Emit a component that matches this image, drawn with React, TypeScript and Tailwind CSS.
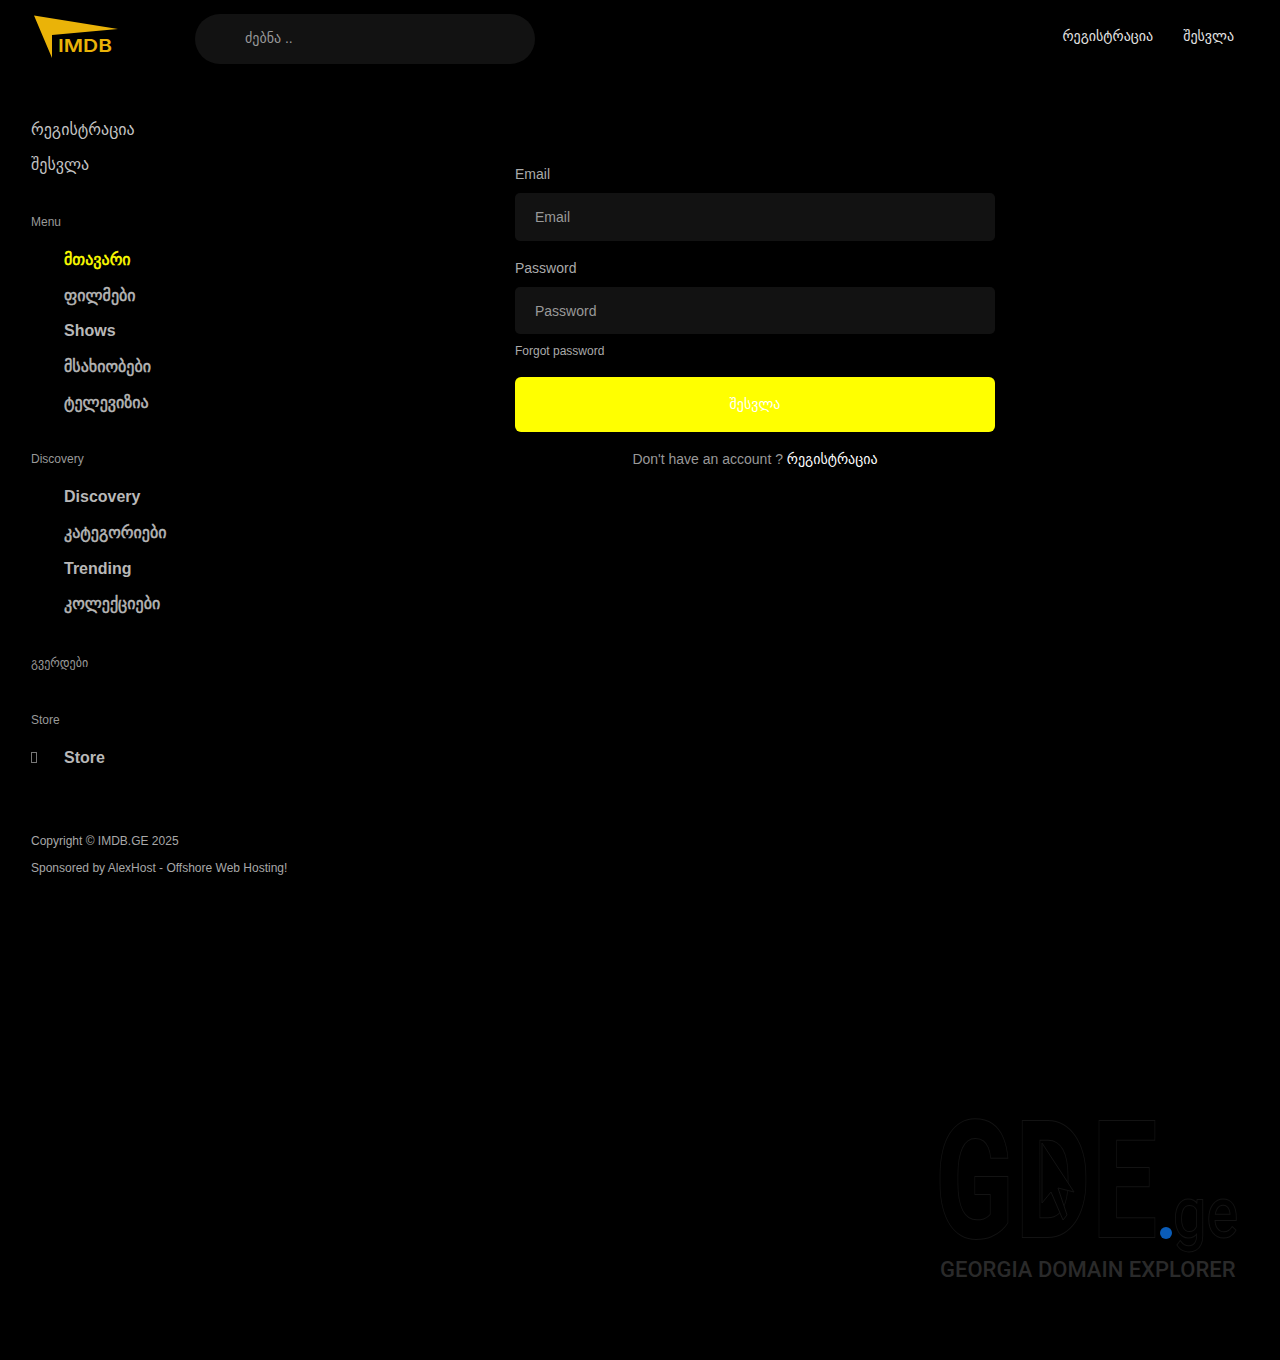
const font = "[font-family:'Liberation_Sans','DejaVu_Sans',sans-serif]";

function NavItem({ label, active, icon, georgian }: { label: string; active?: boolean; icon?: boolean; georgian?: boolean }) {
  return (
    <a className={`flex h-[35.7px] items-center text-base ${active ? "text-[#ffff00]" : "text-[#b8b8b8]"}`}>
      <span className="flex w-[33px] items-center">
        {icon ? <span className="h-[11px] w-[6px] border border-[#777777]" /> : null}
      </span>
      <span className={georgian ? "font-normal [-webkit-text-stroke:0.5px_currentColor]" : "font-bold"}>{label}</span>
    </a>
  );
}

function SectionTitle({ children }: { children: string }) {
  return <div className="flex h-[18px] items-center text-xs text-[#999999]">{children}</div>;
}

function Field({ label, type, nudge }: { label: string; type: string; nudge?: boolean }) {
  return (
    <div className="flex flex-col">
      <label className="mb-[9px] h-[20px] text-sm leading-[20px] text-[#aaaaaa]">{label}</label>
      <input
        type={type}
        placeholder={label}
        className={`h-[47.5px] rounded-[5px] bg-[#121212] px-5 text-sm text-white outline-none placeholder:text-[#999999] ${nudge ? "pt-[2px]" : ""}`}
      />
    </div>
  );
}

export default function App() {
  return (
    <div className={`relative h-[1360px] overflow-hidden bg-black ${font}`}>
      <header className="flex h-[78px] items-start justify-between pr-[46px]">
        <div className="flex items-start">
          <div className="ml-[34px] mt-[15px] h-[44px] w-[86px]">
            <svg viewBox="0 0 86 44" className="h-[44px] w-[86px]">
              <polygon points="0,0.5 84,14 18,20 18,43" fill="#eab308" />
              <text x="24" y="37" fill="#eab308" fontSize="17.5" fontWeight="600" fontFamily="Inter, sans-serif" textLength="54" lengthAdjust="spacingAndGlyphs">IMDB</text>
            </svg>
          </div>
          <div className="ml-[75px] mt-[14px] flex h-[50px] w-[340px] items-center rounded-full bg-[#121212] pb-[2px] pl-[50px] text-sm text-[#999999]">
            ძებნა ..
          </div>
        </div>
        <nav className="mt-[26px] flex gap-[30px] text-sm leading-[20px] text-[#e4e4e4]">
          <a>რეგისტრაცია</a>
          <a>შესვლა</a>
        </nav>
      </header>

      <div className="flex">
        <aside className="w-[230px] shrink-0 whitespace-nowrap pl-[31px] pt-[34px]">
          <div className="flex flex-col text-base text-[#c4c4c4]">
            <a className="flex h-[35px] items-center">რეგისტრაცია</a>
            <a className="flex h-[35px] items-center">შესვლა</a>
          </div>

          <div className="mt-[31px]">
            <SectionTitle>Menu</SectionTitle>
          </div>
          <div className="mt-[11.2px] flex flex-col">
            <NavItem label="მთავარი" active georgian />
            <NavItem label="ფილმები" georgian />
            <NavItem label="Shows" />
            <NavItem label="მსახიობები" georgian />
            <NavItem label="ტელევიზია" georgian />
          </div>

          <div className="mt-[29.3px]">
            <SectionTitle>Discovery</SectionTitle>
          </div>
          <div className="mt-[11.5px] flex flex-col">
            <NavItem label="Discovery" />
            <NavItem label="კატეგორიები" georgian />
            <NavItem label="Trending" />
            <NavItem label="კოლექციები" georgian />
          </div>

          <div className="mt-[31.7px]">
            <SectionTitle>გვერდები</SectionTitle>
          </div>
          <div className="mt-[39px]">
            <SectionTitle>Store</SectionTitle>
          </div>
          <div className="mt-[11px]">
            <NavItem label="Store" icon />
          </div>

          <div className="mt-[56.3px] flex flex-col gap-[9px] text-xs text-[#a8a8a8]">
            <p className="leading-[18px]">Copyright © IMDB.GE 2025</p>
            <p className="leading-[18px]">Sponsored by AlexHost - Offshore Web Hosting!</p>
          </div>
        </aside>

        <main className="flex flex-1 justify-center pt-[86px]">
          <form className="flex w-[480px] flex-col">
            <Field label="Email" type="email" />
            <div className="mt-[17px]">
              <Field label="Password" type="password" nudge />
            </div>
            <a className="mt-[8px] h-[18px] text-xs leading-[18px] text-[#aaaaaa]">Forgot password</a>
            <button type="button" className="mt-[17px] h-[55px] rounded-[6px] bg-[#ffff00] pb-[2px] text-sm text-white">
              შესვლა
            </button>
            <p className="mt-[17px] text-center text-sm leading-[20px] text-[#999999]">
              Don't have an account ? <a className="text-white">რეგისტრაცია</a>
            </p>
          </form>
        </main>
      </div>

      <div className="absolute left-[938px] top-[1110px] h-[180px] w-[310px] [font-family:Roboto,sans-serif]">
        <div className="absolute left-[-3px] top-[7px] origin-left scale-x-[0.71] whitespace-nowrap text-[163px] font-bold leading-[130px] tracking-[2px] text-black [-webkit-text-stroke:2px_#131313] [paint-order:stroke_fill]">
          GDE
        </div>
        <svg viewBox="0 0 40 84" className="absolute left-[100px] top-[30px] h-[84px] w-[40px]">
          <path d="M4 3 L36 52 L20 48 L29 75 L25 80 L13 52 L4 63 Z" fill="#000" stroke="#131313" />
        </svg>
        <div className="absolute left-[222px] top-[117px] h-[12px] w-[12px] rounded-full bg-[#0a5cb8]" />
        <div className="absolute left-[235px] top-[68px] origin-left scale-x-[0.85] whitespace-nowrap text-[70px] font-normal leading-[70px] text-black [-webkit-text-stroke:2px_#131313] [paint-order:stroke_fill]">
          ge
        </div>
        <div className="absolute left-[2px] top-[146px] whitespace-nowrap text-[22px] font-medium leading-[28px] text-[#2a2a2a]">
          GEORGIA DOMAIN EXPLORER
        </div>
      </div>
    </div>
  );
}
